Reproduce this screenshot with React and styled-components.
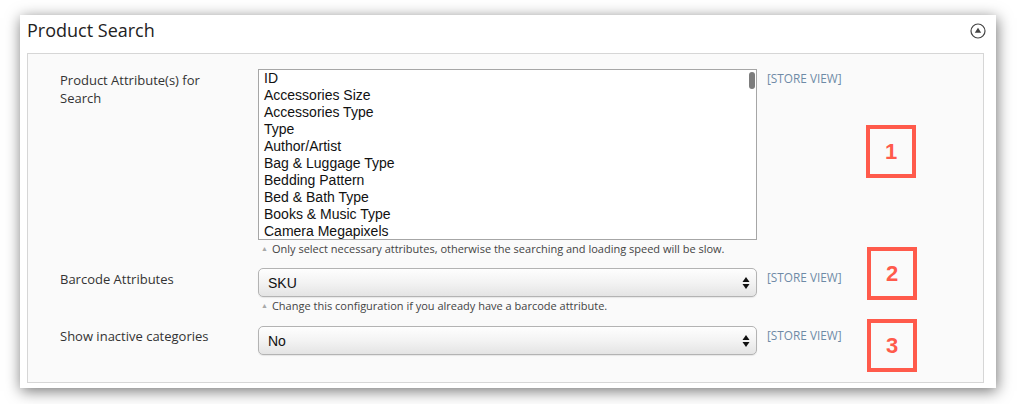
import styled, { createGlobalStyle } from "styled-components";

const GlobalStyle = createGlobalStyle`
  html, body {
    margin: 0;
    padding: 0;
    background: #ffffff;
  }
  body {
    font-family: "Open Sans", "Liberation Sans", sans-serif;
  }
`;

const Page = styled.div`
  width: 1017px;
  height: 404px;
  padding: 15px 0 0 20px;
  box-sizing: border-box;
  overflow: hidden;
`;

const Card = styled.section`
  width: 976px;
  height: 373px;
  background: #ffffff;
  box-shadow: 1px 3px 14px rgba(0, 0, 0, 0.55);
  display: flex;
  flex-direction: column;
  padding: 0 12px 5px 7px;
  box-sizing: border-box;
`;

const Header = styled.header`
  height: 38px;
  display: flex;
  align-items: flex-start;
  justify-content: space-between;
  padding-top: 3px;
  box-sizing: border-box;
`;

const Title = styled.h2`
  margin: 0;
  font-size: 18px;
  font-weight: 400;
  color: #222;
  line-height: 24px;
`;

const Toggle = styled.span`
  display: flex;
  width: 16px;
  height: 16px;
  margin: 5px -2px 0 0;
`;

const Fieldset = styled.div`
  position: relative;
  flex: 1;
  background: #fafafa;
  border: 1px solid #d6d6d6;
  padding: 15px 0 0 32px;
  display: flex;
  flex-direction: column;
  gap: 12px;
`;

const Row = styled.div`
  display: grid;
  grid-template-columns: 188px 499px auto;
  column-gap: 10px;
  align-items: start;
`;

const Label = styled.label`
  font-size: 13px;
  line-height: 18px;
  color: #333;
  padding-top: ${(p) => p.offset || 2}px;
  max-width: 160px;
`;

const Control = styled.div`
  display: flex;
  flex-direction: column;
`;

const ListBox = styled.div`
  position: relative;
  height: 171px;
  box-sizing: border-box;
  border: 1px solid #a6a6a6;
  background: #fff;
  overflow: hidden;
  padding-left: 5px;
`;

const Option = styled.div`
  font-family: "Liberation Sans", Arial, sans-serif;
  font-size: 14px;
  line-height: 17px;
  color: #111;
  white-space: nowrap;
`;

const Thumb = styled.span`
  position: absolute;
  top: 2px;
  right: 1px;
  width: 6px;
  height: 17px;
  border-radius: 3px;
  background: #7d7d7d;
`;

const Select = styled.div`
  height: 29px;
  box-sizing: border-box;
  border: 1px solid #b3b3b3;
  border-radius: 5px;
  background: linear-gradient(#fefefe, #f3f3f3 50%, #e4e4e4);
  box-shadow: 0 1px 1px rgba(0, 0, 0, 0.08);
  display: flex;
  align-items: center;
  justify-content: space-between;
  padding: 0 6px 0 9px;
  font-family: "Liberation Sans", Arial, sans-serif;
  font-size: 14px;
  color: #111;
`;

const Note = styled.div`
  box-sizing: border-box;
  padding: 1px 0 0 3px;
  height: ${(p) => p.h || 16}px;
  font-size: 11px;
  line-height: 15px;
  color: #444;
  display: flex;
  align-items: flex-start;
  gap: 4px;
  white-space: nowrap;
`;

const NoteMark = styled.span`
  font-size: 7px;
  line-height: 15px;
  color: #a8a8a8;
`;

const Scope = styled.span`
  font-size: 11.8px;
  line-height: 16px;
  color: #6e8aa6;
  padding-top: 1px;
  white-space: nowrap;
`;

const Callout = styled.div`
  position: absolute;
  left: ${(p) => p.left}px;
  top: ${(p) => p.top}px;
  width: 50px;
  height: 53px;
  box-sizing: border-box;
  border: 4px solid #ff5a4b;
  display: flex;
  align-items: center;
  justify-content: center;
  font-family: "Liberation Sans", Arial, sans-serif;
  font-weight: 700;
  font-size: 22px;
  color: #ff5a4b;
`;

const Arrows = () => (
  <svg width="8" height="14" viewBox="0 0 8 14">
    <path d="M4 1 L7.5 6 H0.5 Z" fill="#111" />
    <path d="M4 13 L7.5 8 H0.5 Z" fill="#111" />
  </svg>
);

const CollapseIcon = () => (
  <svg width="16" height="16" viewBox="0 0 16 16">
    <circle cx="8" cy="8" r="7" fill="none" stroke="#444" strokeWidth="1.2" />
    <path d="M8 4.8 L11.2 9.8 H4.8 Z" fill="#444" />
  </svg>
);

const attributes = [
  "ID",
  "Accessories Size",
  "Accessories Type",
  "Type",
  "Author/Artist",
  "Bag & Luggage Type",
  "Bedding Pattern",
  "Bed & Bath Type",
  "Books & Music Type",
  "Camera Megapixels",
];

export default function App() {
  return (
    <>
      <GlobalStyle />
      <Page>
        <Card>
          <Header>
            <Title>Product Search</Title>
            <Toggle>
              <CollapseIcon />
            </Toggle>
          </Header>
          <Fieldset>
            <Row>
              <Label>Product Attribute(s) for Search</Label>
              <Control>
                <ListBox>
                  {attributes.map((a) => (
                    <Option key={a}>{a}</Option>
                  ))}
                  <Thumb />
                </ListBox>
                <Note>
                  <NoteMark>▲</NoteMark>
                  <span>Only select necessary attributes, otherwise the searching and loading speed will be slow.</span>
                </Note>
              </Control>
              <Scope>[STORE VIEW]</Scope>
            </Row>
            <Row>
              <Label>Barcode Attributes</Label>
              <Control>
                <Select>
                  <span>SKU</span>
                  <Arrows />
                </Select>
                <Note h={17}>
                  <NoteMark>▲</NoteMark>
                  <span>Change this configuration if you already have a barcode attribute.</span>
                </Note>
              </Control>
              <Scope>[STORE VIEW]</Scope>
            </Row>
            <Row>
              <Label offset={1}>Show inactive categories</Label>
              <Control>
                <Select>
                  <span>No</span>
                  <Arrows />
                </Select>
              </Control>
              <Scope>[STORE VIEW]</Scope>
            </Row>
            <Callout left={838} top={71}>1</Callout>
            <Callout left={839} top={193}>2</Callout>
            <Callout left={839} top={265}>3</Callout>
          </Fieldset>
        </Card>
      </Page>
    </>
  );
}
